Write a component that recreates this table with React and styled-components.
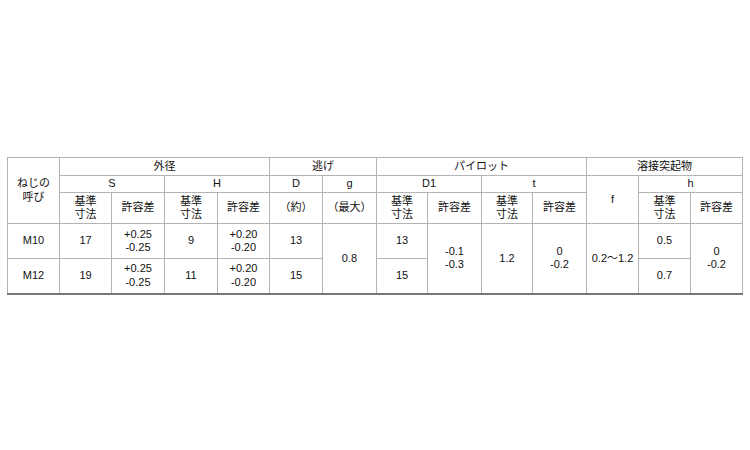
import React from "react";
import styled, { createGlobalStyle } from "styled-components";

const Global = createGlobalStyle`
  html, body { margin: 0; padding: 0; background: #fff; }
  body { font-family: "Liberation Sans", Arial, "Noto Sans CJK JP", sans-serif; }
`;

const Page = styled.div`
  width: 750px;
  height: 450px;
  padding: 157px 0 0 7px;
  box-sizing: border-box;
`;

const Table = styled.table`
  border-collapse: collapse;
  table-layout: fixed;
  width: 735px;
  border-top: 1px solid #333;
  border-bottom: 2px solid #777;
  border-left: 1px solid #777;
  border-right: 1px solid #777;
  color: #111;
  font-size: 11px;
`;

const Cell = styled.td`
  border: 1px solid #b4b4b4;
  text-align: center;
  vertical-align: middle;
  padding: 0;
  line-height: 13.5px;
  font-family: "Liberation Sans", Arial, "Noto Sans CJK JP", sans-serif;
`;

const Row = styled.tr`
  height: ${(p) => p.$h}px;
`;

const widths = [52, 52, 53, 53, 52, 53, 54, 51, 54, 51, 54, 52, 52, 52];

const Two = ({ a, b }) => (
  <>
    {a}
    <br />
    {b}
  </>
);

export default function App() {
  return (
    <>
      <Global />
      <Page>
        <Table>
          <colgroup>
            {widths.map((w, i) => (
              <col key={i} style={{ width: w }} />
            ))}
          </colgroup>
          <tbody>
            <Row $h={18}>
              <Cell rowSpan={3}>
                <Two a="ねじの" b="呼び" />
              </Cell>
              <Cell colSpan={4}>外径</Cell>
              <Cell colSpan={2}>逃げ</Cell>
              <Cell colSpan={4}>パイロット</Cell>
              <Cell colSpan={3}>溶接突起物</Cell>
            </Row>
            <Row $h={17}>
              <Cell colSpan={2}>S</Cell>
              <Cell colSpan={2}>H</Cell>
              <Cell>D</Cell>
              <Cell>g</Cell>
              <Cell colSpan={2}>D1</Cell>
              <Cell colSpan={2}>t</Cell>
              <Cell rowSpan={2}>f</Cell>
              <Cell colSpan={2}>h</Cell>
            </Row>
            <Row $h={31}>
              <Cell><Two a="基準" b="寸法" /></Cell>
              <Cell>許容差</Cell>
              <Cell><Two a="基準" b="寸法" /></Cell>
              <Cell>許容差</Cell>
              <Cell>（約）</Cell>
              <Cell>（最大）</Cell>
              <Cell><Two a="基準" b="寸法" /></Cell>
              <Cell>許容差</Cell>
              <Cell><Two a="基準" b="寸法" /></Cell>
              <Cell>許容差</Cell>
              <Cell><Two a="基準" b="寸法" /></Cell>
              <Cell>許容差</Cell>
            </Row>
            <Row $h={35}>
              <Cell>M10</Cell>
              <Cell>17</Cell>
              <Cell><Two a="+0.25" b="-0.25" /></Cell>
              <Cell>9</Cell>
              <Cell><Two a="+0.20" b="-0.20" /></Cell>
              <Cell>13</Cell>
              <Cell rowSpan={2}>0.8</Cell>
              <Cell>13</Cell>
              <Cell rowSpan={2}><Two a="-0.1" b="-0.3" /></Cell>
              <Cell rowSpan={2}>1.2</Cell>
              <Cell rowSpan={2}><Two a="0" b="-0.2" /></Cell>
              <Cell rowSpan={2}>0.2〜1.2</Cell>
              <Cell>0.5</Cell>
              <Cell rowSpan={2}><Two a="0" b="-0.2" /></Cell>
            </Row>
            <Row $h={35}>
              <Cell>M12</Cell>
              <Cell>19</Cell>
              <Cell><Two a="+0.25" b="-0.25" /></Cell>
              <Cell>11</Cell>
              <Cell><Two a="+0.20" b="-0.20" /></Cell>
              <Cell>15</Cell>
              <Cell>15</Cell>
              <Cell>0.7</Cell>
            </Row>
          </tbody>
        </Table>
      </Page>
    </>
  );
}
